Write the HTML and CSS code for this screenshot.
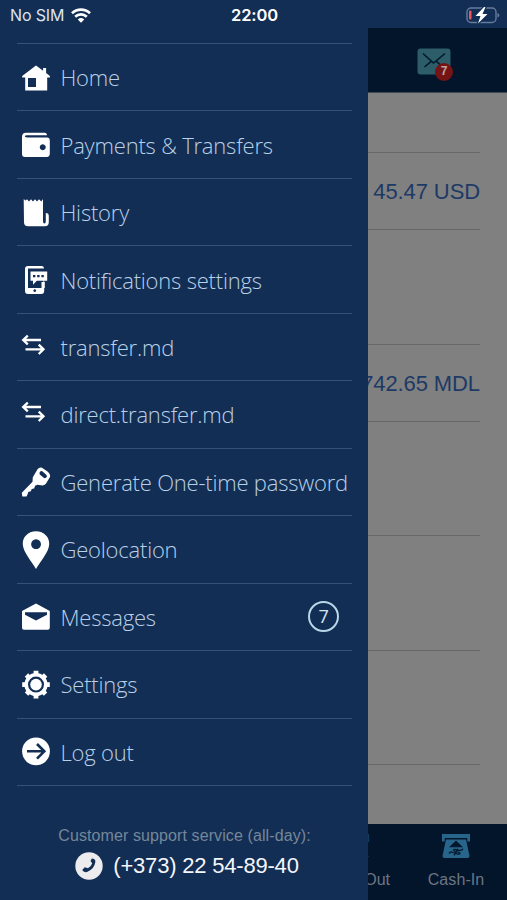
FILE: index.html
```html
<!DOCTYPE html>
<html lang="en">
<head>
<meta charset="utf-8">
<title>Menu</title>
<link rel="stylesheet" href="styles.css">
</head>
<body>
<div class="phone">
  <header class="status">
    <div class="carrier">No SIM
      <svg width="20" height="15" viewBox="0 0 20 15" fill="none" stroke="#fff" stroke-width="2.7"><path d="M1 5.300a13 13 0 0 1 18 0M4.200 8.700a8.500 8.500 0 0 1 11.600 0"/><path d="M6.800 11.400a4.800 4.800 0 0 1 6.400 0L10 14.700z" fill="#fff" stroke="none"/></svg>
    </div>
    <time>22:00</time>
    <svg class="battery" width="34" height="18" viewBox="0 0 34 18"><rect x="1" y="2" width="29" height="14.500" rx="4" fill="none" stroke="#667c9c" stroke-width="1.400"/><path d="M31.500 7v4.500q1.800-.5 1.800-2.200T31.500 7z" fill="#667c9c"/><rect x="3" y="4.500" width="2.500" height="9" rx="1" fill="#f0525a"/><path d="M18 1 9.500 10h5L12 17.500 21.500 8h-5L19.500 1z" fill="#fff" stroke="#132e54" stroke-width="2.400" paint-order="stroke"/></svg>
  </header>
  <main class="stage">
    <nav class="drawer">
      <ul class="menu">
        <li><svg class="icon" viewBox="0 0 30 40"><path fill-rule="evenodd" d="M15 6.500 1.200 17v1.500h3v13h22v-13h2.700V17l-3.800-3V9h-3v2.700zM7 19h8v9H7z"/></svg><span>Home</span></li>
        <li><svg class="icon" viewBox="0 0 30 40"><path fill-rule="evenodd" d="M5 6.700h18.500q2.500 0 2.500 2.500H6q-2.200 0-2.200 1.100T6 11.500h20q2.800 0 2.800 3v13q0 3.400-3 3.400H4q-3 0-3-3V11q0-4.300 4-4.300zm16.700 11.600a3 3 0 1 0 .1 0z"/></svg><span>Payments &amp; Transfers</span></li>
        <li><svg class="icon" viewBox="0 0 30 40"><path d="M2.700 5 4.500 6.500 6 5.200 8 7.500l2-2.300 2 2.300 2-2.300 2 2.300 2-2.300 2.300 2.300L22 5v22q0 2.600 1.400 2.600T24.800 27V19q3 0 3 3v6q0 4.300-4 4.300H7q-4 0-4-4z"/></svg><span>History</span></li>
        <li><svg class="icon" viewBox="0 0 30 40"><path fill-rule="evenodd" d="M7 5h14q2 0 2 2.600H7V27h17v-6h-1.500v-2.200h.7V30q0 3-3 3H7q-3 0-3-3V8q0-3 3-3zm6.700 23.200a1.400 1.400 0 1 0 .1 0z"/><path d="M20.500 21H23v8h-2.500z"/><path fill-rule="evenodd" d="M9.500 10.500h16.700v9.200H15.800l-3.800 4v-4H9.500zM12 14v2.300h2.400V14zm4.200 0v2.300h2.400V14zm4.200 0v2.300h2.400V14z"/></svg><span>Notifications settings</span></li>
        <li><svg class="icon line" viewBox="0 0 30 40"><path d="M6.800 6.700 2.200 11l4.600 4.300M2.500 11H20M17.700 15.600l4.800 4.700-4.800 4.700M4.500 20.300H22"/></svg><span>transfer.md</span></li>
        <li><svg class="icon line" viewBox="0 0 30 40"><path d="M6.800 6.700 2.200 11l4.600 4.300M2.500 11H20M17.700 15.600l4.800 4.700-4.800 4.700M4.500 20.300H22"/></svg><span>direct.transfer.md</span></li>
        <li><svg class="icon" viewBox="0 0 30 40"><path fill-rule="evenodd" d="M16.500 6.200Q18.400 4 21 4.800l5.500 3.600q3 2.300 2.600 5.400l-4.200 7q-1.800 2-5 1.500l-3.500-.6-2.300 1-1 2.800-2.400.4-.8 2.400-2.700.7-.5 2-1.200 2.500H1.300l-.5-3.700 10.700-11 .3-4.500zm3 2.100q-1.800 1.300-.7 3.100l4.200 3.700q1.900.5 2.900-1.300.2-1-.7-2L21.600 8.500q-1-.7-2.100-.2z"/></svg><span>Generate One-time password</span></li>
        <li><svg class="icon" viewBox="0 0 30 40"><path fill-rule="evenodd" d="M15 .3c8 0 13.700 6 13.200 13.200C27.700 21.300 19 31 15 38 11 31 2.300 21.300 1.800 13.500 1.300 6.300 7 .3 15 .3zm0 8a4.900 4.900 0 1 0 .1 0z"/></svg><span>Geolocation</span></li>
        <li><svg class="icon" viewBox="0 0 30 40"><path fill-rule="evenodd" d="m15 5.500 13.800 7.500v16.800q0 2-2 2H3q-2 0-2-2V13zM4 14.200v2.600l11 5.600 11-5.600v-2.600z"/></svg><span>Messages</span><b class="count">7</b></li>
        <li><svg class="icon" viewBox="0 0 30 40"><g id="teeth"><path d="M12.600 4.700h4.800V10h-4.800zM12.600 27h4.800v5.400h-4.800zM1.200 16.200h5.300V21H1.200zM23.500 16.200h5.300V21h-5.300z"/><path d="M12.600 5h4.800v5h-4.800zM12.600 27h4.800v5h-4.800zM1.500 16.200h5V21h-5zM23.500 16.200h5V21h-5z" transform="rotate(45 15 18.600)"/></g><circle cx="15" cy="18.600" r="9.800" fill="none" stroke="#fff" stroke-width="3.600"/><circle cx="15" cy="18.600" r="5.800"/></svg><span>Settings</span></li>
        <li><svg class="icon" viewBox="0 0 30 40"><circle cx="15" cy="18.300" r="13.900"/><path d="M6 18.300h17M16 11l7.300 7.300-7.300 7.300" fill="none" stroke="#132e54" stroke-width="2.600"/></svg><span>Log out</span></li>
      </ul>
      <footer class="support">
        <p class="hint">Customer support service (all-day):</p>
        <p class="tel"><svg width="28" height="28" viewBox="0 0 28 28"><circle cx="14" cy="14" r="13.700" fill="#ececee"/><path d="M16.800 6.500q3.800.3 3.600 3.300-1 7.200-8.400 10.300-3.500.7-4.800-2l2.600-2.800 3.200 1q3.200-1.600 4.200-5l-1.700-2.200z" fill="#132e54"/></svg><span>(+373) 22 54-89-40</span></p>
      </footer>
    </nav>
    <section class="page">
      <div class="topbar">
        <div class="mail"><svg width="34" height="27" viewBox="0 0 34 27"><rect x=".5" y=".5" width="33" height="26" rx="3" fill="#2c5d68"/><path d="M6 5.500 16.500 15 28 5.500M7.500 19l7-5.800M19 13.200l7 5.800" fill="none" stroke="#03182d" stroke-width="1.600"/></svg><b class="badge">7</b></div>
      </div>
      <div class="accounts">
        <div class="gap first"></div>
        <div class="amount">45.47 USD</div>
        <div class="gap"></div>
        <div class="amount">742.65 MDL</div>
        <div class="gap"></div>
        <div class="gap"></div>
        <div class="gap"></div>
      </div>
      <div class="tabs">
        <div class="tab out"><svg width="30" height="26" viewBox="0 0 30 26"><path d="M0 1h30v8h-2V4H0zM26 18l4 6h-4z" fill="#123c5d"/></svg><span>Cash-Out</span></div>
        <div class="tab in"><svg width="30" height="26" viewBox="0 0 30 26"><path d="M1 1h28v7.500h-2.700V5H3.700v3.500H1z" fill="#28658b"/><path d="M5 6.500h20l3.500 16.500q0 2-2 2h-23q-2 0-2-2z" fill="#28658b"/><path d="m15 7.500 7 6.700H8z" fill="#03182d"/><path d="M8 20.500q1.500-2.500 4-1l5 1.500q3 .5 1.500-1.500l-5-1.500q-2-1.500.5-1.700l4 1q2.500.5 4-1.500M13 22.300l4-6.500" fill="none" stroke="#03182d" stroke-width="1.300"/></svg><span>Cash-In</span></div>
      </div>
    </section>
  </main>
</div>
</body>
</html>
```
FILE: styles.css
```css
* { box-sizing: border-box; }
body { margin: 0; font-family: "Liberation Sans", Arial, sans-serif; }
p, ul { margin: 0; padding: 0; list-style: none; }
.phone { width: 507px; height: 900px; overflow: hidden; display: flex; flex-direction: column; background: #132e54; }
.status { height: 28px; padding: 2px 7px 0 10px; display: grid; grid-template-columns: 1fr auto 1fr; align-items: center; color: #fff; font-family: Inter, sans-serif; font-size: 16px; }
.carrier { display: flex; align-items: center; gap: 7px; color: #dce4ee; letter-spacing: -.15px; white-space: nowrap; }
.status time { font-size: 16.500px; font-weight: 600; letter-spacing: -.1px; margin-right: 1px; }
.battery { justify-self: end; }
.stage { flex: 1; display: grid; grid-template-columns: 368px 139px; min-height: 0; }
.drawer { padding: 15px 16px 0 17px; display: flex; flex-direction: column; min-width: 0; }
.menu { height: 743px; border-top: 1px solid #35507a; display: grid; grid-template-columns: minmax(0, 1fr); grid-template-rows: repeat(11, 1fr); }
.menu li { display: flex; align-items: center; border-bottom: 1px solid #35507a; padding: 3px 13px 0 4px; color: #b9d0e7; font: 300 22px/30px "Open Sans", sans-serif; letter-spacing: -.2px; white-space: nowrap; }
.menu span { margin: -3px 0 0 9.500px; }
.icon { width: 30px; height: 40px; flex: none; fill: #fff; }
.line { fill: none; stroke: #fff; stroke-width: 2.300; }
.count { width: 31px; height: 31px; margin: -4px 0 0 auto; border: 2px solid #b9d8e7; border-radius: 50%; display: grid; place-items: center; font: 400 18px/1 "Open Sans", sans-serif; color: #d5e6ef; }
.support { margin-top: 41px; text-align: center; }
.hint { color: #75879a; font-size: 16px; line-height: 18px; letter-spacing: .1px; }
.tel { display: flex; align-items: center; justify-content: center; gap: 10px; margin-top: 7px; color: #f3f6fa; font-size: 22px; line-height: 28px; padding-left: 5px; letter-spacing: -.2px; }
.page { display: flex; flex-direction: column; background: #808080; overflow: hidden; min-width: 0; }
.topbar { height: 65px; flex: none; background: #03152b; border-bottom: 1px solid #3e4a57; padding: 20px 0 0 49px; }
.mail { position: relative; width: 34px; }
.mail svg { display: block; }
.badge { position: absolute; left: 18px; top: 15px; width: 18px; height: 18px; border-radius: 50%; background: #751414; color: #bda5a1; font-size: 12px; line-height: 17px; text-align: center; }
.accounts { flex: 1; margin-right: 27px; color: #1d3a66; }
.gap { height: 114.500px; border-bottom: 1px solid #686868; }
.first { height: 60px; }
.amount { height: 77px; border-bottom: 1px solid #686868; display: flex; align-items: center; justify-content: flex-end; font-size: 22px; letter-spacing: -.1px; white-space: nowrap; padding-top: 2px; }
.tabs { height: 76px; flex: none; background: #03152b; color: #6c7682; font-size: 16px; display: flex; }
.tab { flex: none; display: flex; flex-direction: column; align-items: center; gap: 12px; padding-top: 9px; white-space: nowrap; }
.tab svg { display: block; }
.out { width: 22px; align-items: flex-end; }
.out svg { margin-right: 21px; }
.in { width: 132px; letter-spacing: .1px; }
```
